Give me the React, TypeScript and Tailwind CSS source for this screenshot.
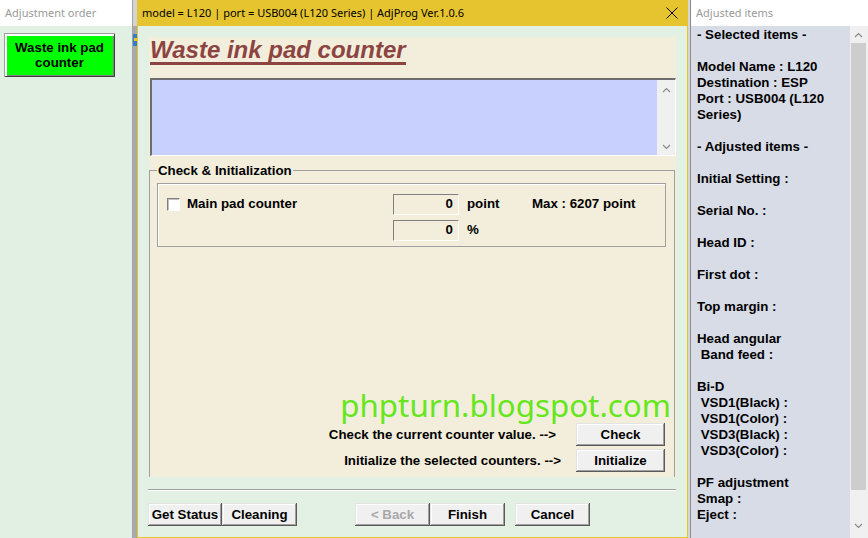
import React from "react";

const btnShadow =
  "shadow-[inset_-1px_-1px_0_#5a5a5a,inset_1px_1px_0_#e3e3e3,inset_-2px_-2px_0_#a0a0a0,inset_2px_2px_0_#ffffff]";

function WinButton({
  children,
  w,
  disabled,
}: {
  children: React.ReactNode;
  w: string;
  disabled?: boolean;
}) {
  return (
    <div
      className={`flex h-[23px] items-center justify-center bg-[#f0f0f0] text-[13.3px] font-bold ${btnShadow} ${w} ${
        disabled ? "text-[#a8a8a8]" : "text-black"
      }`}
    >
      {children}
    </div>
  );
}

function Chevron({ up }: { up?: boolean }) {
  return (
    <svg width="9" height="6" viewBox="0 0 9 6" className="block">
      {up ? (
        <polyline points="1,5 4.5,1.5 8,5" fill="none" stroke="#8a8a8a" strokeWidth="1.2" />
      ) : (
        <polyline points="1,1 4.5,4.5 8,1" fill="none" stroke="#8a8a8a" strokeWidth="1.2" />
      )}
    </svg>
  );
}

const rightLines = [
  "- Selected items -",
  "",
  "Model Name : L120",
  "Destination : ESP",
  "Port : USB004 (L120",
  "Series)",
  "",
  "- Adjusted items -",
  "",
  "Initial Setting :",
  "",
  "Serial No. :",
  "",
  "Head ID :",
  "",
  "First dot :",
  "",
  "Top margin :",
  "",
  "Head angular",
  " Band feed :",
  "",
  "Bi-D",
  " VSD1(Black) :",
  " VSD1(Color) :",
  " VSD3(Black) :",
  " VSD3(Color) :",
  "",
  "PF adjustment",
  "Smap :",
  "Eject :",
];

export default function App() {
  return (
    <div className="flex h-[538px] w-[868px] overflow-hidden bg-[#e1f0e2] font-['Liberation_Sans',Arial,sans-serif] text-black">
      {/* Left window */}
      <div className="flex w-[133px] flex-col border-r border-[#a4a4a4] bg-[#e1f0e2]">
        <div className="flex h-[26px] items-center bg-white pl-[5px] font-['Noto_Sans',sans-serif] text-[11px] text-[#9a9a9a]">
          Adjustment order
        </div>
        <div className="pl-[4px] pt-[7px]">
          <div className="flex h-[44px] w-[111px] flex-col items-center justify-center bg-[#00ff00] text-[13.3px] font-bold leading-[15px] text-black shadow-[inset_1px_1px_0_#a0a0a0,inset_-1px_-1px_0_#404040,inset_3px_3px_0_#ffffff,inset_-2px_-2px_0_#808080]">
            <span>Waste ink pad</span>
            <span>counter</span>
          </div>
        </div>
      </div>

      {/* strip between */}
      <div className="flex w-[4px] flex-col bg-[#a9a9a9]">
        <div className="h-[26px] bg-[#d4d4d4]" />
        <div className="mt-[8px] h-[12px] w-[4px] overflow-hidden">
          <svg width="4" height="12" viewBox="0 0 4 12" className="block">
            <rect x="0" y="0" width="4" height="12" fill="#2f7fd0" />
            <rect x="1" y="4" width="3" height="3" fill="#e8c52a" />
          </svg>
        </div>
      </div>

      {/* Main window */}
      <div className="flex w-[551px] flex-col border-x border-b border-[#e6c42f] bg-[#e2f1e3]">
        <div className="flex h-[26px] shrink-0 items-center justify-between bg-[#e6c42f] pl-[4px] pr-[9px] font-['Noto_Sans',sans-serif] text-[11px] text-black">
          <span>model = L120 | port = USB004 (L120 Series) | AdjProg Ver.1.0.6</span>
          <svg width="12" height="12" viewBox="0 0 12 12" className="block">
            <line x1="0.5" y1="0.5" x2="11.5" y2="11.5" stroke="#000" strokeWidth="1" />
            <line x1="11.5" y1="0.5" x2="0.5" y2="11.5" stroke="#000" strokeWidth="1" />
          </svg>
        </div>

        <div className="flex flex-1 flex-col px-[11px] pt-[11px]">
          {/* beige page */}
          <div className="flex h-[440px] flex-col overflow-hidden bg-[#f3eedb]">
            <div className="pl-[1px] pt-[1px]">
              <span className="inline-block border-b-[3px] border-[#8c4442] text-[24px] font-bold italic leading-[24px] text-[#8c4442]">
                Waste ink pad counter
              </span>
            </div>

            {/* text area */}
            <div className="ml-[1px] mt-[13px] flex h-[78px] w-[526px] border-l-2 border-t-2 border-b border-r border-l-[#6d6d6d] border-t-[#6d6d6d] border-b-white border-r-white bg-[#c8d1fe]">
              <div className="flex-1" />
              <div className="flex w-[18px] flex-col items-center justify-between bg-[#f0f0f0] pb-[5px] pt-[7px]">
                <Chevron up />
                <Chevron />
              </div>
            </div>

            {/* group */}
            <fieldset className="mr-[1px] mt-[6px] flex-1 border border-b-0 border-[#a0a0a0]">
              <legend className="ml-[7px] px-[1px] text-[13.3px] font-bold leading-[17px]">
                {"Check & Initialization"}
              </legend>
              <div className="flex flex-col">
                <div className="ml-[7px] mt-[4px] h-[64px] w-[509px] border border-[#a0a0a0] pt-[9px] text-[13.3px] font-bold shadow-[inset_1px_1px_0_#ffffff]">
                  <div className="flex h-[21px] items-center pt-[1px]">
                    <div className="ml-[9px] h-[13px] w-[13px] border border-b-white border-l-[#808080] border-r-white border-t-[#808080] bg-white shadow-[inset_1px_1px_0_#c0c0c0]" />
                    <div className="ml-[7px] w-[206px]">Main pad counter</div>
                    <div className="flex h-[21px] w-[66px] items-center justify-end border border-b-white border-l-[#808080] border-r-white border-t-[#808080] bg-[#f3eedb] pr-[5px]">
                      0
                    </div>
                    <div className="ml-[8px] w-[65px]">point</div>
                    <div>Max : 6207 point</div>
                  </div>
                  <div className="mt-[5px] flex h-[21px] items-center pt-[1px]">
                    <div className="w-[235px]" />
                    <div className="flex h-[21px] w-[66px] items-center justify-end border border-b-white border-l-[#808080] border-r-white border-t-[#808080] bg-[#f3eedb] pr-[5px]">
                      0
                    </div>
                    <div className="ml-[8px]">%</div>
                  </div>
                </div>

                <div className="mt-[141px] pr-[3px] text-right font-['Noto_Sans',sans-serif] text-[31.3px] leading-[34px] text-[#66e61c]">
                  phpturn.blogspot.com
                </div>

                <div className="mt-[1px] flex h-[23px] items-center justify-end pr-[9px] text-[13.3px] font-bold">
                  <span className="mr-[20px]">{"Check the current counter value. -->"}</span>
                  <WinButton w="w-[89px]">Check</WinButton>
                </div>
                <div className="mt-[3px] flex h-[23px] items-center justify-end pr-[9px] text-[13.3px] font-bold">
                  <span className="mr-[15px]">{"Initialize the selected counters. -->"}</span>
                  <WinButton w="w-[89px]">Initialize</WinButton>
                </div>
              </div>
            </fieldset>
          </div>

          {/* separator */}
          <div className="-ml-[1px] mt-[12px] h-[2px] w-[528px] border-b border-t border-b-white border-t-[#a0a0a0]" />

          {/* bottom buttons */}
          <div className="-ml-[1px] mt-[12px] flex">
            <WinButton w="w-[74px]">Get Status</WinButton>
            <WinButton w="w-[75px]">Cleaning</WinButton>
            <div className="w-[58px]" />
            <WinButton w="w-[75px]" disabled>
              {"< Back"}
            </WinButton>
            <WinButton w="w-[75px]">Finish</WinButton>
            <div className="w-[10px]" />
            <WinButton w="w-[75px]">Cancel</WinButton>
          </div>
        </div>
      </div>

      {/* strip */}
      <div className="w-[2px] bg-[#d6d6d6]" />

      {/* Right panel */}
      <div className="flex flex-1 flex-col border-l border-[#8c8c8c]">
        <div className="flex h-[26px] shrink-0 items-center bg-white pl-[5px] font-['Noto_Sans',sans-serif] text-[11px] text-[#9a9a9a]">
          Adjusted items
        </div>
        <div className="flex flex-1 bg-[#d8dce6]">
          <div className="flex-1 pl-[6px] pt-[1px] text-[13.3px] font-bold leading-[16px]">
            {rightLines.map((l, i) => (
              <div key={i} className="h-[16px] whitespace-pre">
                {l}
              </div>
            ))}
          </div>
          <div className="flex w-[18px] flex-col bg-[#f0f0f0]">
            <div className="flex h-[17px] items-center justify-center pr-[1px]">
              <Chevron up />
            </div>
            <div className="ml-[1px] h-[447px] w-[15px] bg-[#cdcdcd]" />
            <div className="flex flex-1 items-end justify-center pb-[9px] pr-[1px]">
              <Chevron />
            </div>
          </div>
        </div>
      </div>
    </div>
  );
}
